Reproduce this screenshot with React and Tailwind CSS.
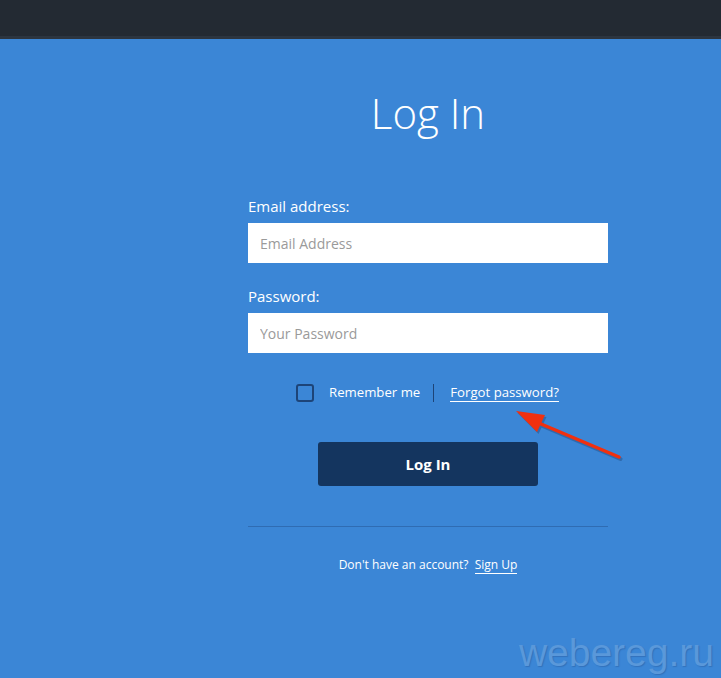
export default function App() {
  return (
    <div className="relative min-h-[678px] bg-[#3b86d6] overflow-hidden" style={{ fontFamily: '"Open Sans", "Noto Sans", sans-serif' }}>
      {/* Top bar */}
      <div className="h-[39px] bg-[#232a33] border-b-[3px] border-[#2c3540]" />

      <main className="ml-[248px] w-[360px] flex flex-col">
        <h1 className="mt-[48px] text-center text-[42px] leading-[52px] font-light text-white">Log In</h1>

        <label className="mt-[57px] text-[15px] leading-[20px] text-white">Email address:</label>
        <input
          type="email"
          placeholder="Email Address"
          className="mt-[7px] h-[40px] w-full bg-white px-3 text-[14px] text-gray-700 placeholder:text-[#9a9a9a] outline-none"
        />

        <label className="mt-[23px] text-[15px] leading-[20px] text-white">Password:</label>
        <input
          type="password"
          placeholder="Your Password"
          className="mt-[7px] h-[40px] w-full bg-white px-3 text-[14px] text-gray-700 placeholder:text-[#9a9a9a] outline-none"
        />

        {/* Remember / forgot row */}
        <div className="mt-[30px] flex items-center text-[13.2px] text-white">
          <span className="ml-[48px] h-[18px] w-[18px] rounded-[3px] border-2 border-[#1d4478]" />
          <span className="ml-[15px]">Remember me</span>
          <span className="ml-[13px] mr-[16px] h-[18px] w-px bg-[#1d4478]" />
          <a href="#" className="leading-[18px] border-b border-white">Forgot password?</a>
        </div>

        <button className="mt-[39px] mx-auto h-[44px] w-[220px] rounded-[3px] bg-[#14355f] text-[15px] font-bold text-white">
          Log In
        </button>

        <div className="mt-[40px] h-px w-full bg-[#2f6cb3]" />

        <p className="mt-[29px] text-center text-[12px] text-white">
          Don't have an account?{' '}
          <a href="#" className="ml-[3px] border-b border-white">Sign Up</a>
        </p>
      </main>

      {/* Red annotation arrow */}
      <svg className="absolute left-[500px] top-[400px]" width="130" height="65" viewBox="0 0 130 65">
        <g transform="translate(1.5,2)" opacity="0.35">
          <line x1="119" y1="57" x2="34" y2="21" stroke="#1a3a66" strokeWidth="4" strokeLinecap="round" />
          <polygon points="16,11 45,15 37,32" fill="#1a3a66" />
        </g>
        <line x1="119" y1="57" x2="34" y2="21" stroke="#f0300f" strokeWidth="3.5" strokeLinecap="round" />
        <polygon points="16,11 45,15 37,32" fill="#f0300f" />
      </svg>

      {/* Watermark */}
      <div
        className="absolute right-[7px] bottom-[6px] text-[39px] leading-none text-[#5a98da]"
        style={{ fontFamily: '"Liberation Sans", Arial, sans-serif', textShadow: '1px 1px 1px rgba(30,70,130,0.3)' }}
      >
        webereg.ru
      </div>
    </div>
  );
}
